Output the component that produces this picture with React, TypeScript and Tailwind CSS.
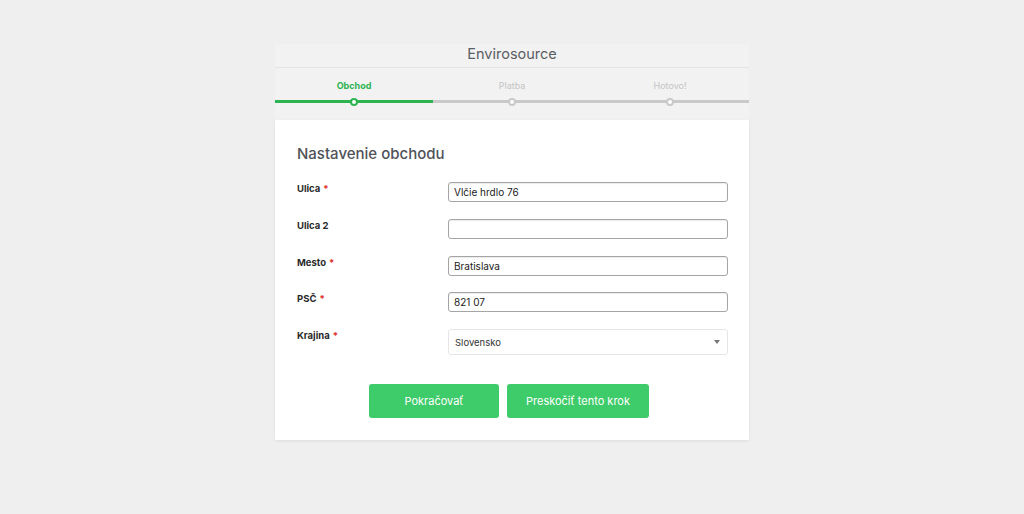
import React from "react";

const fields = [
  { label: "Ulica", required: true, value: "Vlčie hrdlo 76" },
  { label: "Ulica 2", required: false, value: "" },
  { label: "Mesto", required: true, value: "Bratislava" },
  { label: "PSČ", required: true, value: "821 07" },
];

const steps = ["Obchod", "Platba", "Hotovo!"];

const App = () => {
  return (
    <div
      className="min-h-screen w-full bg-[#efefef] pt-[44px]"
      style={{ fontFamily: "Inter, 'Liberation Sans', sans-serif" }}
    >
      <div className="mx-auto w-[474px]">
        {/* Header */}
        <div className="h-[24px] bg-[#f2f2f2] border-b border-[#e4e4e4] flex items-center justify-center">
          <h1 className="text-[14.5px] leading-none text-[#5a5d63] -mt-[2px]">Envirosource</h1>
        </div>

        {/* Steps */}
        <div className="bg-[#f2f2f2] pb-[15px]">
          <div className="grid grid-cols-3 pt-[13px]">
            {steps.map((step, i) => (
              <div key={step} className="flex flex-col items-center">
                <span
                  className={`text-[9px] leading-none h-[11px] ${
                    i === 0 ? "font-bold text-[#2db34f]" : "text-[#c4c4c4]"
                  }`}
                >
                  {step}
                </span>
                <div className="relative w-full h-[7px] mt-[6px] flex items-center">
                  <div
                    className={`w-full h-[3px] ${i === 0 ? "bg-[#2db34f]" : "bg-[#c9c9c9]"}`}
                  />
                  <div
                    className={`absolute left-1/2 -translate-x-1/2 w-[8px] h-[8px] rounded-full bg-white border-[2px] ${
                      i === 0 ? "border-[#2db34f]" : "border-[#c9c9c9]"
                    }`}
                  />
                </div>
              </div>
            ))}
          </div>
        </div>

        {/* Card */}
        <div className="bg-white shadow-[0_1px_3px_rgba(0,0,0,0.08)] pl-[22px] pr-[21px] pt-[26px] pb-[22px]">
          <h2 className="text-[15px] leading-none font-medium text-[#505258] mb-[21px]">
            Nastavenie obchodu
          </h2>

          <div className="flex flex-col gap-[16.75px]">
            {fields.map((f) => (
              <div key={f.label} className="flex items-start">
                <label className="w-[151px] text-[9.5px] font-bold text-[#2a2a2a] pt-[1px] leading-[12px]">
                  {f.label}
                  {f.required && <span className="text-[#e0342f] ml-[3px]">*</span>}
                </label>
                <input
                  readOnly
                  value={f.value}
                  className="flex-1 h-[20px] border border-[#a5a5a5] rounded-[3px] px-[5px] text-[10px] text-[#222] shadow-[inset_0_1px_1px_rgba(0,0,0,0.08)] outline-none"
                />
              </div>
            ))}

            <div className="flex items-start">
              <label className="w-[151px] text-[9.5px] font-bold text-[#2a2a2a] pt-[1px] leading-[12px]">
                Krajina<span className="text-[#e0342f] ml-[3px]">*</span>
              </label>
              <div className="flex-1 h-[26px] border border-[#e6e6e6] rounded-[3px] px-[6px] flex items-center justify-between">
                <span className="text-[9.5px] text-[#333] mt-[2px]">Slovensko</span>
                <svg width="6" height="4" viewBox="0 0 6 4" className="mr-[1px]">
                  <path d="M0 0H6L3 4Z" fill="#777" />
                </svg>
              </div>
            </div>
          </div>

          <div className="flex justify-center gap-[8px] mt-[29px] pr-[7px]">
            <button className="w-[130px] h-[34px] rounded-[3px] bg-[#3ecb69] text-white text-[11px]">
              Pokračovať
            </button>
            <button className="w-[142px] h-[34px] rounded-[3px] bg-[#3ecb69] text-white text-[11px]">
              Preskočiť tento krok
            </button>
          </div>
        </div>
      </div>
    </div>
  );
};

export default App;
